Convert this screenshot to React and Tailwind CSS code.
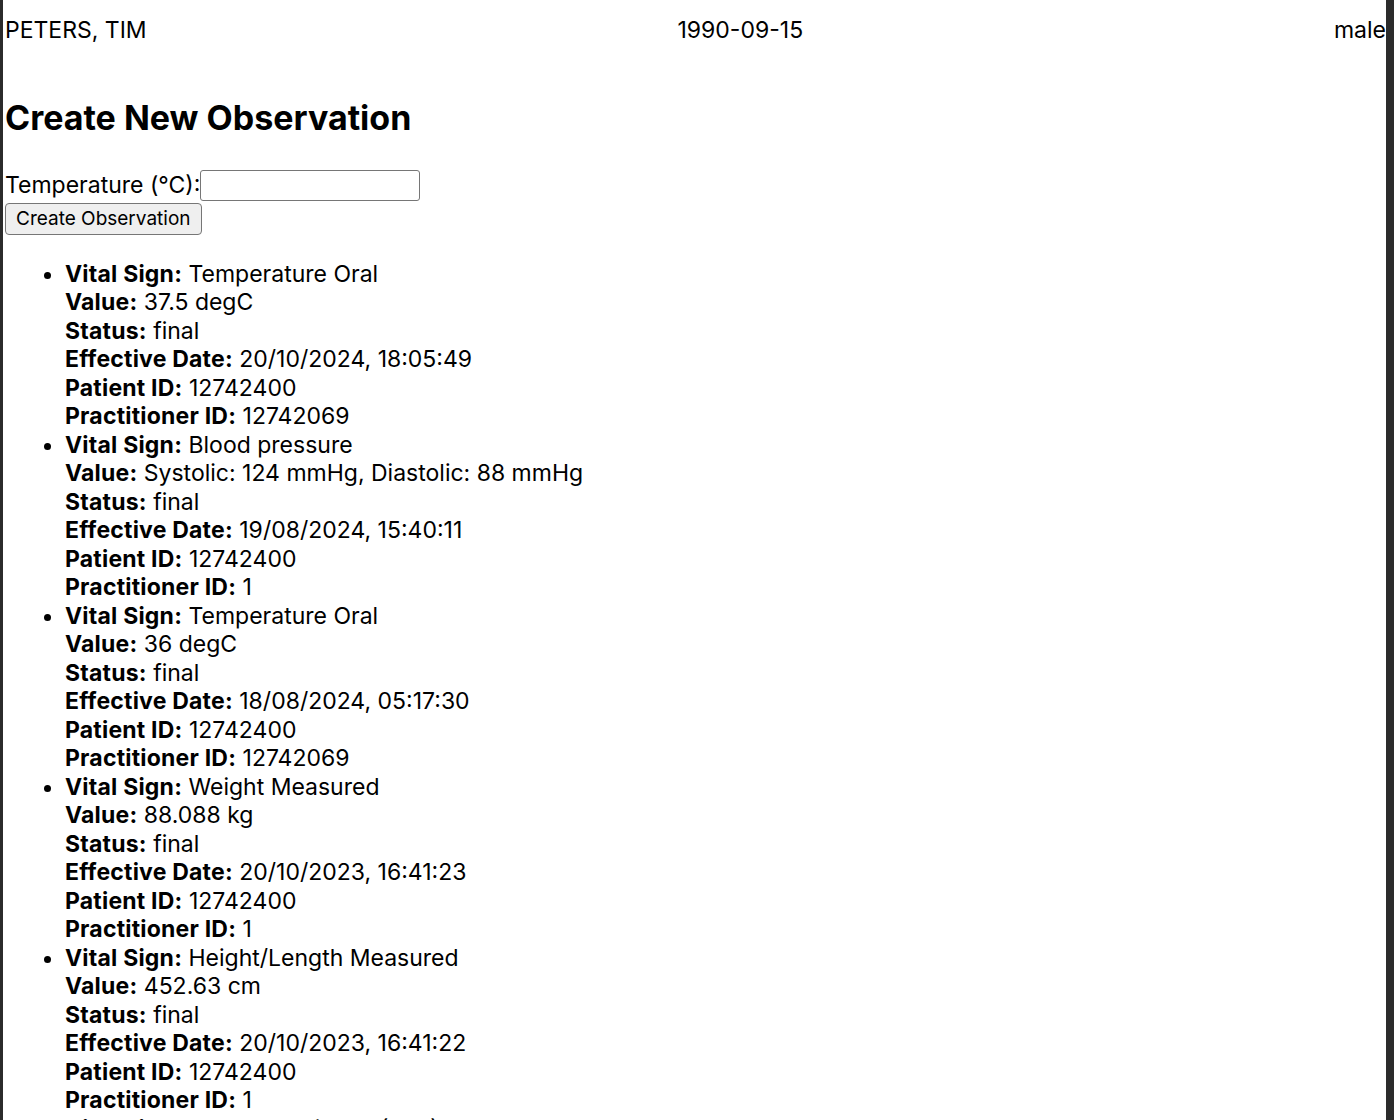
import React, { useState } from 'react';

const observations = [
  {
    vital: 'Temperature Oral',
    value: '37.5 degC',
    status: 'final',
    date: '20/10/2024, 18:05:49',
    patient: '12742400',
    practitioner: '12742069',
  },
  {
    vital: 'Blood pressure',
    value: 'Systolic: 124 mmHg, Diastolic: 88 mmHg',
    status: 'final',
    date: '19/08/2024, 15:40:11',
    patient: '12742400',
    practitioner: '1',
  },
  {
    vital: 'Temperature Oral',
    value: '36 degC',
    status: 'final',
    date: '18/08/2024, 05:17:30',
    patient: '12742400',
    practitioner: '12742069',
  },
  {
    vital: 'Weight Measured',
    value: '88.088 kg',
    status: 'final',
    date: '20/10/2023, 16:41:23',
    patient: '12742400',
    practitioner: '1',
  },
  {
    vital: 'Height/Length Measured',
    value: '452.63 cm',
    status: 'final',
    date: '20/10/2023, 16:41:22',
    patient: '12742400',
    practitioner: '1',
  },
  {
    vital: 'Body mass index (BMI)',
    value: '4.3 kg/m2',
    status: 'final',
    date: '20/10/2023, 16:41:21',
    patient: '12742400',
    practitioner: '1',
  },
];

const Row = ({ label, children }) => (
  <div>
    <strong className="font-bold tracking-[0.2px]">{label}:</strong> {children}
  </div>
);

export default function App() {
  const [temp, setTemp] = useState('');

  const handleSubmit = (e) => {
    e.preventDefault();
  };

  return (
    <div
      className="flex min-h-screen bg-white text-black"
      style={{ fontFamily: 'Inter, "Noto Sans", sans-serif' }}
    >
      <div className="w-[3px] shrink-0 bg-[#2b2b2b]" />

      <main className="flex-1 pl-[2px] pt-[16px] text-[23px] leading-[28.5px]">
        {/* patient header */}
        <div className="flex justify-between">
          <span>PETERS, TIM</span>
          <span>1990-09-15</span>
          <span>male</span>
        </div>

        <h2 className="mt-[51px] text-[34px] font-bold leading-[44px]">
          Create New Observation
        </h2>

        <form onSubmit={handleSubmit} className="mt-[30px]">
          <div className="flex items-center">
            <label htmlFor="temp">Temperature (°C):</label>
            <input
              id="temp"
              type="text"
              value={temp}
              onChange={(e) => setTemp(e.target.value)}
              className="h-[31px] w-[220px] rounded-[3px] border border-[#767676] bg-white px-1 text-[20px] outline-none"
            />
          </div>
          <button
            type="submit"
            className="mt-[2px] h-[32px] rounded-[4px] border border-[#767676] bg-[#efefef] px-[10px] text-[19px] leading-[22px]"
          >
            Create Observation
          </button>
        </form>

        <ul className="mt-[25px] list-disc pl-[60px]">
          {observations.map((o, i) => (
            <li key={i}>
              <Row label="Vital Sign">{o.vital}</Row>
              <Row label="Value">{o.value}</Row>
              <Row label="Status">{o.status}</Row>
              <Row label="Effective Date">{o.date}</Row>
              <Row label="Patient ID">{o.patient}</Row>
              <Row label="Practitioner ID">{o.practitioner}</Row>
            </li>
          ))}
        </ul>
      </main>

      <div className="w-[8px] shrink-0 bg-[#2b2b2b]" />
    </div>
  );
}
